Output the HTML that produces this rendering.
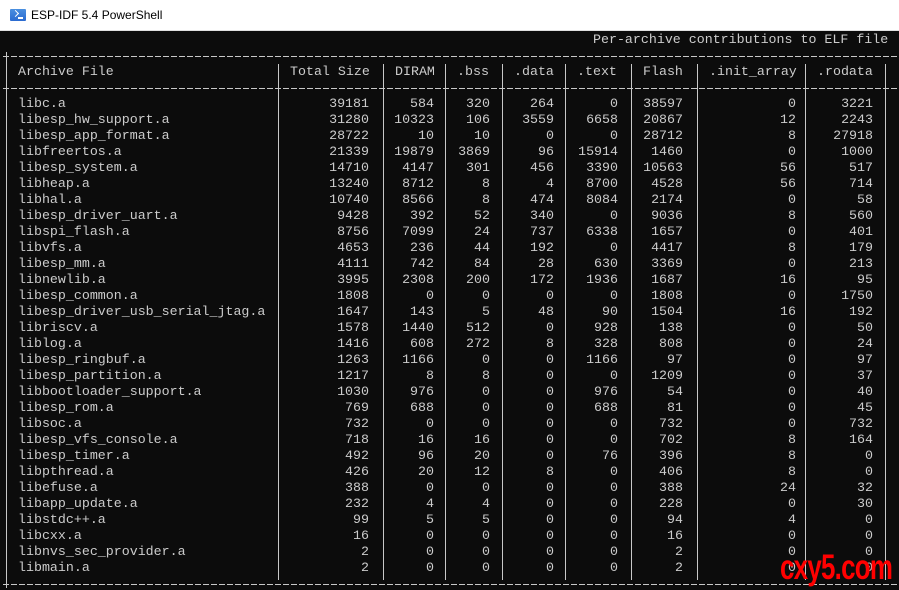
<!DOCTYPE html>
<html><head><meta charset="utf-8"><style>
*{margin:0;padding:0;box-sizing:border-box}
body{width:899px;height:590px;overflow:hidden;background:#0c0c0c;position:relative;font-family:"Liberation Mono",monospace;font-size:13.3px;color:#cccccc}
.tb{position:absolute;left:0;top:0;width:899px;height:31px;background:#fff;border-bottom:1px solid #e0e0e0}
.tb span{position:absolute;left:31px;top:8px;font-family:"Liberation Sans",sans-serif;font-size:12px;color:#000}
.ic{position:absolute;left:10px;top:9px;width:16px;height:12px;background:linear-gradient(#4a8fe0,#2a6ad0);border-radius:1px}
.ic:after{content:"";position:absolute;left:3px;top:2px;width:4px;height:4px;border-right:1.5px solid #fff;border-bottom:1.5px solid #fff;transform:rotate(-45deg)}
.ic:before{content:"";position:absolute;left:8px;top:8px;width:5px;height:1.5px;background:#fff}
.h{position:absolute;height:1px;background:repeating-linear-gradient(90deg,#c8c8c8 0 6px,transparent 6px 8px)}
.v{position:absolute;width:1px;background:#c8c8c8}
.r{position:absolute;left:0;width:899px;height:16px;line-height:16px;white-space:pre}
.r span,.r b{position:absolute;font-weight:normal}
.r span{left:18px}
.r b:nth-of-type(1){right:530px}.r b:nth-of-type(2){right:465px}.r b:nth-of-type(3){right:409px}.r b:nth-of-type(4){right:345px}
.r b:nth-of-type(5){right:281px}.r b:nth-of-type(6){right:216px}.r b:nth-of-type(7){right:103px}.r b:nth-of-type(8){right:26px}
.hd i{position:absolute;font-style:normal}
.wm{position:absolute;left:780px;top:549px;font-family:"Liberation Sans",sans-serif;font-weight:bold;font-size:35px;color:#ff0000;letter-spacing:-1px;line-height:38px;transform:scaleX(0.74);transform-origin:left;white-space:nowrap}
</style></head><body>
<div class="tb"><div class="ic"></div><span>ESP-IDF 5.4 PowerShell</span></div>
<div class="r" style="top:32px"><i style="position:absolute;left:593px;font-style:normal">Per-archive contributions to ELF file</i></div>
<div class="h" style="left:3px;width:896px;top:56px"></div>
<div class="h" style="left:3px;width:896px;top:88px"></div>
<div class="h" style="left:3px;width:896px;top:584px"></div>
<div class="v" style="left:6px;top:52px;height:536px"></div>
<div class="v" style="left:278px;top:64px;height:516px"></div>
<div class="v" style="left:383px;top:64px;height:516px"></div>
<div class="v" style="left:445px;top:64px;height:516px"></div>
<div class="v" style="left:502px;top:64px;height:516px"></div>
<div class="v" style="left:565px;top:64px;height:516px"></div>
<div class="v" style="left:631px;top:64px;height:516px"></div>
<div class="v" style="left:697px;top:64px;height:516px"></div>
<div class="v" style="left:805px;top:64px;height:516px"></div>
<div class="v" style="left:885px;top:64px;height:516px"></div>
<div class="r hd" style="top:64px"><i style="left:18px">Archive File</i><i style="left:290px">Total Size</i><i style="left:395px">DIRAM</i><i style="left:457px">.bss</i><i style="left:514px">.data</i><i style="left:577px">.text</i><i style="left:643px">Flash</i><i style="left:709px">.init_array</i><i style="left:817px">.rodata</i></div>
<div class="r" style="top:96px"><span>libc.a</span><b>39181</b><b>584</b><b>320</b><b>264</b><b>0</b><b>38597</b><b>0</b><b>3221</b></div>
<div class="r" style="top:112px"><span>libesp_hw_support.a</span><b>31280</b><b>10323</b><b>106</b><b>3559</b><b>6658</b><b>20867</b><b>12</b><b>2243</b></div>
<div class="r" style="top:128px"><span>libesp_app_format.a</span><b>28722</b><b>10</b><b>10</b><b>0</b><b>0</b><b>28712</b><b>8</b><b>27918</b></div>
<div class="r" style="top:144px"><span>libfreertos.a</span><b>21339</b><b>19879</b><b>3869</b><b>96</b><b>15914</b><b>1460</b><b>0</b><b>1000</b></div>
<div class="r" style="top:160px"><span>libesp_system.a</span><b>14710</b><b>4147</b><b>301</b><b>456</b><b>3390</b><b>10563</b><b>56</b><b>517</b></div>
<div class="r" style="top:176px"><span>libheap.a</span><b>13240</b><b>8712</b><b>8</b><b>4</b><b>8700</b><b>4528</b><b>56</b><b>714</b></div>
<div class="r" style="top:192px"><span>libhal.a</span><b>10740</b><b>8566</b><b>8</b><b>474</b><b>8084</b><b>2174</b><b>0</b><b>58</b></div>
<div class="r" style="top:208px"><span>libesp_driver_uart.a</span><b>9428</b><b>392</b><b>52</b><b>340</b><b>0</b><b>9036</b><b>8</b><b>560</b></div>
<div class="r" style="top:224px"><span>libspi_flash.a</span><b>8756</b><b>7099</b><b>24</b><b>737</b><b>6338</b><b>1657</b><b>0</b><b>401</b></div>
<div class="r" style="top:240px"><span>libvfs.a</span><b>4653</b><b>236</b><b>44</b><b>192</b><b>0</b><b>4417</b><b>8</b><b>179</b></div>
<div class="r" style="top:256px"><span>libesp_mm.a</span><b>4111</b><b>742</b><b>84</b><b>28</b><b>630</b><b>3369</b><b>0</b><b>213</b></div>
<div class="r" style="top:272px"><span>libnewlib.a</span><b>3995</b><b>2308</b><b>200</b><b>172</b><b>1936</b><b>1687</b><b>16</b><b>95</b></div>
<div class="r" style="top:288px"><span>libesp_common.a</span><b>1808</b><b>0</b><b>0</b><b>0</b><b>0</b><b>1808</b><b>0</b><b>1750</b></div>
<div class="r" style="top:304px"><span>libesp_driver_usb_serial_jtag.a</span><b>1647</b><b>143</b><b>5</b><b>48</b><b>90</b><b>1504</b><b>16</b><b>192</b></div>
<div class="r" style="top:320px"><span>libriscv.a</span><b>1578</b><b>1440</b><b>512</b><b>0</b><b>928</b><b>138</b><b>0</b><b>50</b></div>
<div class="r" style="top:336px"><span>liblog.a</span><b>1416</b><b>608</b><b>272</b><b>8</b><b>328</b><b>808</b><b>0</b><b>24</b></div>
<div class="r" style="top:352px"><span>libesp_ringbuf.a</span><b>1263</b><b>1166</b><b>0</b><b>0</b><b>1166</b><b>97</b><b>0</b><b>97</b></div>
<div class="r" style="top:368px"><span>libesp_partition.a</span><b>1217</b><b>8</b><b>8</b><b>0</b><b>0</b><b>1209</b><b>0</b><b>37</b></div>
<div class="r" style="top:384px"><span>libbootloader_support.a</span><b>1030</b><b>976</b><b>0</b><b>0</b><b>976</b><b>54</b><b>0</b><b>40</b></div>
<div class="r" style="top:400px"><span>libesp_rom.a</span><b>769</b><b>688</b><b>0</b><b>0</b><b>688</b><b>81</b><b>0</b><b>45</b></div>
<div class="r" style="top:416px"><span>libsoc.a</span><b>732</b><b>0</b><b>0</b><b>0</b><b>0</b><b>732</b><b>0</b><b>732</b></div>
<div class="r" style="top:432px"><span>libesp_vfs_console.a</span><b>718</b><b>16</b><b>16</b><b>0</b><b>0</b><b>702</b><b>8</b><b>164</b></div>
<div class="r" style="top:448px"><span>libesp_timer.a</span><b>492</b><b>96</b><b>20</b><b>0</b><b>76</b><b>396</b><b>8</b><b>0</b></div>
<div class="r" style="top:464px"><span>libpthread.a</span><b>426</b><b>20</b><b>12</b><b>8</b><b>0</b><b>406</b><b>8</b><b>0</b></div>
<div class="r" style="top:480px"><span>libefuse.a</span><b>388</b><b>0</b><b>0</b><b>0</b><b>0</b><b>388</b><b>24</b><b>32</b></div>
<div class="r" style="top:496px"><span>libapp_update.a</span><b>232</b><b>4</b><b>4</b><b>0</b><b>0</b><b>228</b><b>0</b><b>30</b></div>
<div class="r" style="top:512px"><span>libstdc++.a</span><b>99</b><b>5</b><b>5</b><b>0</b><b>0</b><b>94</b><b>4</b><b>0</b></div>
<div class="r" style="top:528px"><span>libcxx.a</span><b>16</b><b>0</b><b>0</b><b>0</b><b>0</b><b>16</b><b>0</b><b>0</b></div>
<div class="r" style="top:544px"><span>libnvs_sec_provider.a</span><b>2</b><b>0</b><b>0</b><b>0</b><b>0</b><b>2</b><b>0</b><b>0</b></div>
<div class="r" style="top:560px"><span>libmain.a</span><b>2</b><b>0</b><b>0</b><b>0</b><b>0</b><b>2</b><b>0</b><b>0</b></div>
<div class="wm">cxy5.com</div>
</body></html>
